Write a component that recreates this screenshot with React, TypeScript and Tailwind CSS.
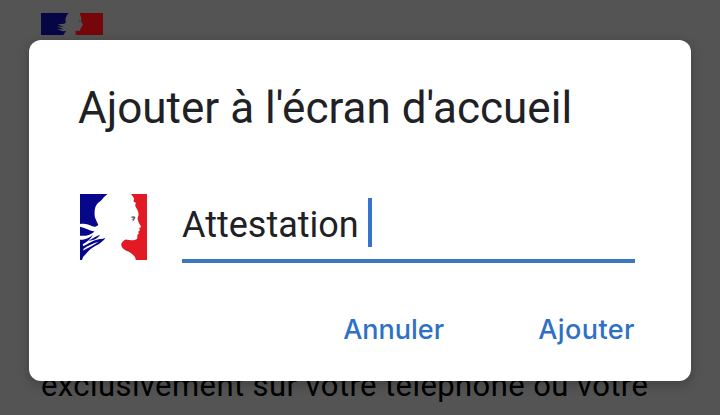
function Marianne({ className }: { className: string }) {
  return (
    <svg className={className} viewBox="0 0 198 196" preserveAspectRatio="none" aria-hidden="true">
      <path d="M0 0H82C69 8 66 19 54 26C43 35 42 53 44 69C47 78 51 84 54 92C48 98 43 98 36 96C25 89 14 87 0 89Z" fill="#07078c" />
      <path d="M0 97C14 100 25 108 43 111C34 119 19 126 0 124Z" fill="#07078c" />
      <path d="M0 136C17 137 31 129 39 119C33 133 22 143 8 149L10 155C23 150 34 139 58 134C66 134 70 132 75 131C65 145 52 151 39 158C27 165 18 178 9 187L6 196H0Z" fill="#07078c" />
      <path d="M25 139C36 134 48 124 59 121C54 130 45 137 25 139Z" fill="#07078c" />
      <path d="M10 163C24 153 39 147 55 142C42 151 26 159 10 168Z" fill="#ffffff" />
      <path d="M151 0H198V196H165C164 184 153 177 143 171C130 165 121 160 122 148C125 142 129 138 135 135C151 139 166 138 169 132L170 121L174 117L172 112L177 108L175 101L181 98L173 84L170 73L173 63C174 52 168 45 163 35L165 26L158 22L160 13Z" fill="#e21a23" />
      <path d="M149 69C155 65 160 66 164 68C162 76 159 80 154 81L158 76L151 76L159 71Z" fill="#596170" />
    </svg>
  );
}

function Flag() {
  return (
    <svg className="h-[22px] w-[62px]" viewBox="0 0 186 66" preserveAspectRatio="none" aria-hidden="true">
      <path d="M0 0H83C76 8 72 15 74 29C67 35 59 32 50 33L67 42L47 40L68 49L48 49L65 55L75 54L67 66H0Z" fill="#060644" />
      <path d="M116 0H186V66H105L103 54L116 53L121 43L126 35L120 25L121 15Z" fill="#75070b" />
      <path d="M112 21L119 22L116 26L112 25Z" fill="#3e4144" />
    </svg>
  );
}

export default function App() {
  return (
    <div className="grid h-[415px] w-[720px] overflow-hidden bg-[#545454] font-['Roboto',sans-serif]">
      <div className="col-start-1 row-start-1 flex flex-col justify-between pt-[13px] pl-[41px]">
        <Flag />
        <p className="h-[49px] text-[31px] leading-[40px] tracking-[0.42px] whitespace-nowrap text-black">
          exclusivement sur votre téléphone ou votre
        </p>
      </div>
      <section
        role="dialog"
        className="z-10 col-start-1 row-start-1 mt-[40px] ml-[29px] flex h-[341px] w-[662px] flex-col rounded-[12px] bg-white pr-[56px] pl-[49px] shadow-[0_3px_12px_rgba(0,0,0,0.25)]"
      >
        <h1 className="mt-[42px] h-[52px] text-[44px] leading-[52px] whitespace-nowrap text-[#202124]">
          Ajouter à l'écran d'accueil
        </h1>
        <div className="mt-[60px] flex h-[69px] items-start">
          <Marianne className="mr-[35px] ml-[2px] h-[66px] w-[67px] shrink-0" />
          <div className="flex h-[69px] flex-1 items-start border-b-4 border-[#3b78bd]">
            <span className="mt-[10px] text-[36px] leading-[42px] text-[#202124]">Attestation</span>
            <span className="mt-[4px] ml-[9px] h-[49px] w-[4px] bg-[#3474cf]" />
          </div>
        </div>
        <div className="mt-[49px] flex justify-end gap-[94px] font-['Inter',sans-serif] text-[27px] leading-[36px] font-medium text-[#2f70c7]">
          <button>Annuler</button>
          <button className="tracking-[0.45px]">Ajouter</button>
        </div>
      </section>
    </div>
  );
}
